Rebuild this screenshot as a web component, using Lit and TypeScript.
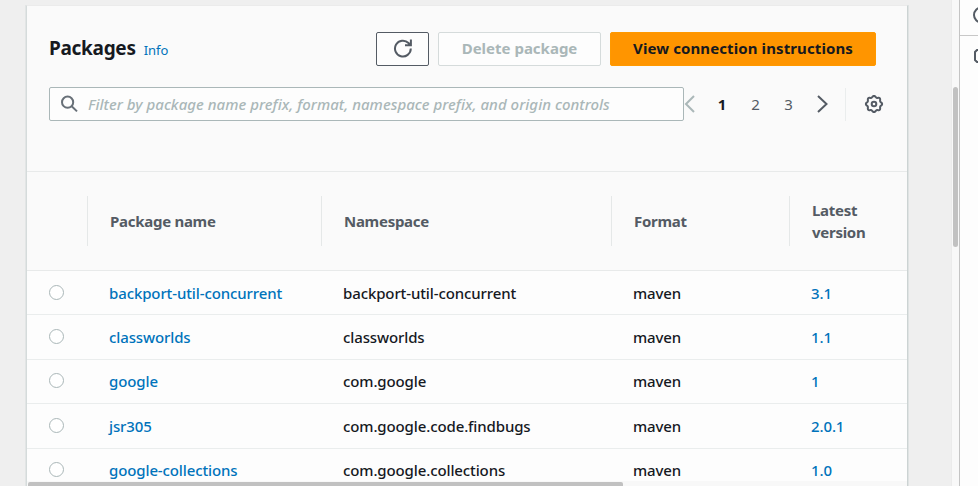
import { LitElement, html, css } from "lit";
import { customElement } from "lit/decorators.js";

const packages = [
  { name: "backport-util-concurrent", ns: "backport-util-concurrent", format: "maven", version: "3.1" },
  { name: "classworlds", ns: "classworlds", format: "maven", version: "1.1" },
  { name: "google", ns: "com.google", format: "maven", version: "1" },
  { name: "jsr305", ns: "com.google.code.findbugs", format: "maven", version: "2.0.1" },
  { name: "google-collections", ns: "com.google.collections", format: "maven", version: "1.0" },
];

// Outline of a gear with eight rounded teeth, centred on 10,10.
const gearPath = (() => {
  const points: string[] = [];
  for (let i = 0; i < 96; i++) {
    const a = (i / 96) * Math.PI * 2;
    const r = 7.4 + 0.7 * Math.cos(8 * a);
    points.push(`${(10 + r * Math.cos(a)).toFixed(2)} ${(10 + r * Math.sin(a)).toFixed(2)}`);
  }
  return `M${points.join("L")}Z`;
})();

@customElement("app-root")
export class AppRoot extends LitElement {
  static styles = css`
    :host {
      display: flex;
      width: 978px;
      height: 486px;
      overflow: hidden;
      background: #efefef;
      font-family: "Noto Sans", "Open Sans", sans-serif;
      font-size: 15px;
      color: #16191f;
    }
    * { box-sizing: border-box; }
    svg { display: block; fill: none; flex: none; }
    .main { flex: 1; min-width: 0; padding: 5px 0 0 26px; }
    .panel {
      width: 882px;
      height: 481px;
      background: #fafafa;
      border-left: 1px solid #d5dbdb;
      border-right: 1px solid #ccd3d3;
      border-top: 1px solid #ebebeb;
      box-shadow: -1px 0 0 #e2e5e5, 1px 0 0 #dfe3e3;
      overflow: hidden;
      position: relative;
    }
    .top { height: 166px; padding: 26px 31px 0 22px; border-bottom: 1px solid #e8eaea; }
    .bar { display: flex; align-items: center; height: 34px; }
    h1 { margin: -2px 0 0; font-size: 19px; line-height: 30px; font-weight: 700; letter-spacing: -0.3px; }
    .info { font-size: 13px; color: #0073bb; margin: 1px 0 0 8px; flex: 1; }
    button {
      height: 34px;
      border-radius: 2px;
      border: 1px solid #545b64;
      background: #fdfdfd;
      font: 700 15px "Noto Sans", "Open Sans", sans-serif;
      padding: 0 0 2px;
      display: flex;
      align-items: center;
      justify-content: center;
      white-space: nowrap;
    }
    .refresh { width: 53px; }
    .delete { width: 163px; margin-left: 9px; border-color: #d5dbdb; color: #aab7b8; }
    .view { width: 266px; margin-left: 9px; border-color: #ff9900; background: #ff9500; color: #16191f; letter-spacing: 0.1px; }
    .filter { display: flex; align-items: center; height: 34px; margin-top: 21px; }
    .search {
      display: flex;
      align-items: center;
      flex: none;
      width: 635px;
      height: 34px;
      padding-left: 10px;
      gap: 10px;
      background: #fdfdfd;
      border: 1px solid #aab7b8;
      border-radius: 2px;
      color: #aab7b8;
      font-style: italic;
      font-weight: 500;
      letter-spacing: 0.03px;
      white-space: nowrap;
    }
    .pager { display: flex; align-items: center; flex: none; color: #545b64; }
    .num { width: 33px; text-align: center; }
    .current { font-weight: 700; color: #16191f; width: 34px; }
    .prev { margin-right: 10px; }
    .next { margin-left: 11px; }
    .rule { width: 1px; height: 33px; background: #eaeded; margin: 0 18px 0 16px; }
    .cols { display: grid; grid-template-columns: 60px 234px 290px 178px 118px; }
    .head { height: 99px; align-items: center; color: #545b64; font-weight: 700; line-height: 22px; letter-spacing: -0.28px; border-bottom: 1px solid #e8eaea; }
    .th { height: 50px; display: flex; align-items: center; border-left: 1px solid #e5e8e8; padding: 0 0 1px 22px; }
    .row { height: 44.4px; align-items: center; background: #fdfdfd; border-bottom: 1px solid #eaeded; white-space: nowrap; font-weight: 500; letter-spacing: -0.12px; }
    .td { padding: 0 0 0 22px; }
    .link { color: #0073bb; }
    .radio { width: 15px; height: 15px; border: 1px solid #aab7b8; border-radius: 50%; margin: 0 0 1px 22px; background: #fff; }
    .hscroll { position: absolute; left: 0; right: 0; bottom: 0; height: 5px; background: #f8f8f8; }
    .hthumb { width: 595px; height: 4px; margin: 1px 0 0 1px; background: #c1c1c1; border-radius: 2px 2px 0 0; }
    .vscroll { width: 8px; background: #f8f8f8; border-left: 1px solid #ebebeb; padding: 87px 1px 0 1px; }
    .vthumb { width: 5px; height: 160px; border-radius: 3px; background: #c1c1c1; }
    .side { width: 19px; border-left: 1px solid #c4c4c4; background: #fdfdfd; overflow: hidden; }
    .sidetop { height: 36px; border-bottom: 1px solid #c8c8c8; padding: 6px 0 0 13px; }
    .sidebody { padding: 12px 0 0 13px; }
  `;

  render() {
    return html`
      <div class="main">
        <div class="panel">
          <div class="top">
            <div class="bar">
              <h1>Packages</h1><span class="info">Info</span>
              <button class="refresh" aria-label="Refresh">
                <svg width="20" height="20" viewBox="0 0 20 20" stroke="#545b64" stroke-width="2">
                  <path d="M17.8 10.6A7.9 7.9 0 1 1 15.5 5L17.2 7M17.9 1.5V7.2H12" />
                </svg>
              </button>
              <button class="delete">Delete package</button>
              <button class="view">View connection instructions</button>
            </div>
            <div class="filter">
              <div class="search">
                <svg width="18" height="18" viewBox="0 0 18 18" stroke="#687078" stroke-width="2">
                  <circle cx="7.6" cy="7.2" r="5.6" /><path d="M11.7 11.3L17 16.4" />
                </svg>
                <span>Filter by package name prefix, format, namespace prefix, and origin controls</span>
              </div>
              <div class="pager">
                <svg class="prev" width="11" height="18" viewBox="0 0 11 18" stroke="#aab7b8" stroke-width="2"><path d="M10 1L2 9L10 17" /></svg>
                <span class="num current">1</span><span class="num">2</span><span class="num">3</span>
                <svg class="next" width="13" height="18" viewBox="0 0 13 18" stroke="#545b64" stroke-width="2"><path d="M2 1L10.5 9L2 17" /></svg>
                <span class="rule"></span>
                <svg width="20" height="20" viewBox="0 0 20 20" stroke="#545b64" stroke-width="2">
                  <path d=${gearPath} /><circle cx="10" cy="10" r="2.3" />
                </svg>
              </div>
            </div>
          </div>
          <div class="cols head">
            <span></span>
            <div class="th">Package name</div>
            <div class="th">Namespace</div>
            <div class="th">Format</div>
            <div class="th">Latest<br />version</div>
          </div>
          ${packages.map(
            (p) => html`<div class="cols row">
              <span class="radio"></span>
              <span class="td link">${p.name}</span>
              <span class="td">${p.ns}</span>
              <span class="td">${p.format}</span>
              <span class="td link">${p.version}</span>
            </div>`
          )}
          <div class="hscroll"><div class="hthumb"></div></div>
        </div>
      </div>
      <div class="vscroll"><div class="vthumb"></div></div>
      <div class="side">
        <div class="sidetop">
          <svg width="18" height="18" viewBox="0 0 18 18" stroke="#545b64" stroke-width="2"><circle cx="8.5" cy="9" r="7.5" /></svg>
        </div>
        <div class="sidebody">
          <svg width="18" height="16" viewBox="0 0 18 16" stroke="#545b64" stroke-width="2"><path d="M5 2H14L16 4V12L14 14H4L2 12V4L4 2Z" /></svg>
        </div>
      </div>
    `;
  }
}
